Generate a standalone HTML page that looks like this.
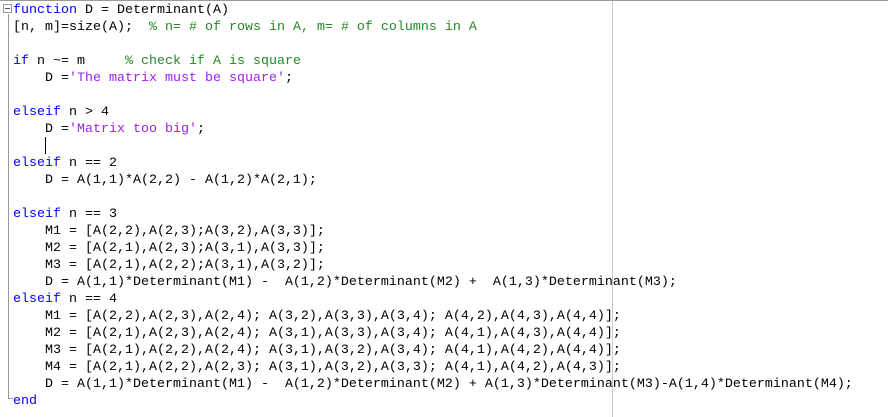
<!DOCTYPE html>
<html><head><meta charset="utf-8"><style>
html,body{margin:0;padding:0;background:#fff;width:888px;height:417px;overflow:hidden;position:relative}
.top{position:absolute;left:0;top:0;width:888px;height:1px;background:#999}
.margin{position:absolute;left:612px;top:1px;width:1px;height:416px;background:#c8c8c8}
.fold{position:absolute;left:8px;top:14px;width:1px;height:385px;background:#999}
.foldend{position:absolute;left:8px;top:398px;width:5px;height:1px;background:#999}
.box{position:absolute;left:3px;top:4px;width:9px;height:9px;border:1px solid #999;box-sizing:border-box;background:#fff}
.box:after{content:"";position:absolute;left:1px;top:3px;width:5px;height:1px;background:#555}
pre{position:absolute;left:13px;top:2px;margin:0;font-family:"Liberation Mono",monospace;font-size:13.33px;line-height:17px;color:#000}
.k{color:#0000ff}.c{color:#228b22}.s{color:#a020f0}
.cur{position:absolute;left:45px;top:137px;width:1px;height:17px;background:#000}
</style></head><body>
<div class="top"></div><div class="margin"></div><div class="fold"></div><div class="foldend"></div><div class="box"></div>
<div class="cur"></div>
<pre><span class="k">function</span> D = Determinant(A)
[n, m]=size(A);  <span class="c">% n= # of rows in A, m= # of columns in A</span>

<span class="k">if</span> n ~= m     <span class="c">% check if A is square</span>
    D =<span class="s">'The matrix must be square'</span>;

<span class="k">elseif</span> n &gt; 4
    D =<span class="s">'Matrix too big'</span>;

<span class="k">elseif</span> n == 2
    D = A(1,1)*A(2,2) - A(1,2)*A(2,1);

<span class="k">elseif</span> n == 3
    M1 = [A(2,2),A(2,3);A(3,2),A(3,3)];
    M2 = [A(2,1),A(2,3);A(3,1),A(3,3)];
    M3 = [A(2,1),A(2,2);A(3,1),A(3,2)];
    D = A(1,1)*Determinant(M1) -  A(1,2)*Determinant(M2) +  A(1,3)*Determinant(M3);
<span class="k">elseif</span> n == 4
    M1 = [A(2,2),A(2,3),A(2,4); A(3,2),A(3,3),A(3,4); A(4,2),A(4,3),A(4,4)];
    M2 = [A(2,1),A(2,3),A(2,4); A(3,1),A(3,3),A(3,4); A(4,1),A(4,3),A(4,4)];
    M3 = [A(2,1),A(2,2),A(2,4); A(3,1),A(3,2),A(3,4); A(4,1),A(4,2),A(4,4)];
    M4 = [A(2,1),A(2,2),A(2,3); A(3,1),A(3,2),A(3,3); A(4,1),A(4,2),A(4,3)];
    D = A(1,1)*Determinant(M1) -  A(1,2)*Determinant(M2) + A(1,3)*Determinant(M3)-A(1,4)*Determinant(M4);
<span class="k">end</span></pre>
</body></html>
